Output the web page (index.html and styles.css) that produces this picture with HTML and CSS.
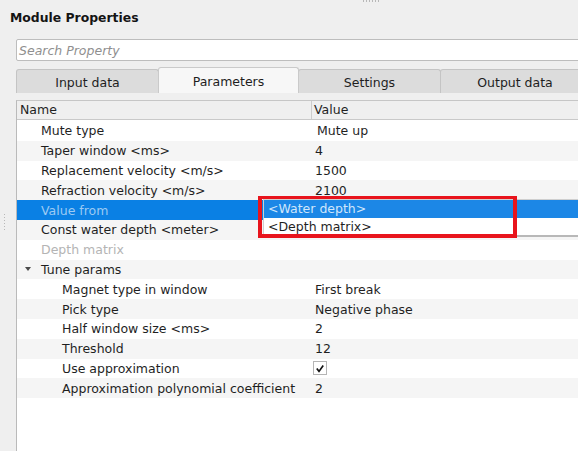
FILE: index.html
```html
<!DOCTYPE html>
<html lang="en">
<head>
<meta charset="utf-8">
<title>Module Properties</title>
<link rel="stylesheet" href="styles.css">
</head>
<body>
<div class="panel">
  <span class="grip grip-top"></span>
  <span class="grip grip-left"></span>
  <h1 class="title">Module Properties</h1>
  <div class="main">
    <div class="search"><span class="placeholder">Search Property</span></div>
    <div class="tabs">
      <div class="tab">Input data</div>
      <div class="tab tab-active">Parameters</div>
      <div class="tab">Settings</div>
      <div class="tab tab-last">Output data</div>
    </div>
    <div class="tree">
      <div class="row head">
        <div class="cell name">Name</div>
        <div class="cell value">Value</div>
      </div>
      <div class="row"><div class="cell name l1">Mute type</div><div class="cell value combo-value">Mute up</div></div>
      <div class="row alt"><div class="cell name l1">Taper window &lt;ms&gt;</div><div class="cell value">4</div></div>
      <div class="row"><div class="cell name l1">Replacement velocity &lt;m/s&gt;</div><div class="cell value">1500</div></div>
      <div class="row alt"><div class="cell name l1">Refraction velocity &lt;m/s&gt;</div><div class="cell value">2100</div></div>
      <div class="row selected"><div class="cell name l1">Value from</div><div class="cell value"></div></div>
      <div class="row alt"><div class="cell name l1">Const water depth &lt;meter&gt;</div><div class="cell value"></div></div>
      <div class="row disabled"><div class="cell name l1">Depth matrix</div><div class="cell value"></div></div>
      <div class="row alt"><div class="cell name l1 branch"><span class="arrow"></span>Tune params</div><div class="cell value"></div></div>
      <div class="row"><div class="cell name l2">Magnet type in window</div><div class="cell value">First break</div></div>
      <div class="row alt"><div class="cell name l2">Pick type</div><div class="cell value">Negative phase</div></div>
      <div class="row"><div class="cell name l2">Half window size &lt;ms&gt;</div><div class="cell value">2</div></div>
      <div class="row alt"><div class="cell name l2">Threshold</div><div class="cell value">12</div></div>
      <div class="row"><div class="cell name l2">Use approximation</div><div class="cell value"><span class="check"><svg viewBox="0 0 13 13" width="13" height="13"><path d="M3 6.6 L5.4 9.6 L10 3.2" fill="none" stroke="#111" stroke-width="1.8"/></svg></span></div></div>
      <div class="row alt"><div class="cell name l2">Approximation polynomial coefficient</div><div class="cell value">2</div></div>

      <ul class="popup">
        <li class="item item-active">&lt;Water depth&gt;</li>
        <li class="item">&lt;Depth matrix&gt;</li>
      </ul>
      <div class="mark"></div>
    </div>
  </div>
</div>
</body>
</html>
```

FILE: styles.css
```css
html, body {
  margin: 0;
  padding: 0;
  height: 100%;
  overflow: hidden;
}

body {
  background: #efefef;
  font-family: "DejaVu Sans", "Liberation Sans", sans-serif;
  font-size: 12.5px;
  color: #1f1f1f;
}

.panel {
  position: relative;
  height: 100%;
  overflow: hidden;
}

/* splitter grips */
.grip {
  position: absolute;
  background-image: radial-gradient(circle, #b8b8b8 0.8px, transparent 1px);
}
.grip-top {
  left: 362px;
  top: 0;
  width: 18px;
  height: 2px;
  background-size: 3px 2px;
}
.grip-left {
  left: 3px;
  top: 213px;
  width: 3px;
  height: 18px;
  background-size: 3px 3px;
}

.title {
  margin: 0;
  padding: 10px 0 0 10px;
  height: 29px;
  font-size: 12.4px;
  font-weight: bold;
  line-height: 16px;
  color: #141414;
}

.main {
  padding-left: 16px;
}

.search {
  height: 20px;
  margin-right: -4px;
  background: #ffffff;
  border: 1px solid #bdbdbd;
  border-radius: 2px;
  display: flex;
  align-items: center;
  padding-left: 2px;
}
.placeholder {
  font-style: italic;
  color: #8f8f8f;
}

.tabs {
  display: flex;
  margin-top: 6px;
  height: 26px;
  align-items: flex-end;
}
.tab {
  flex: none;
  box-sizing: border-box;
  width: 143px;
  height: 24px;
  background: #dcdcdc;
  border: 1px solid #c4c4c4;
  border-bottom: none;
  border-radius: 3px 3px 0 0;
  display: flex;
  align-items: center;
  justify-content: center;
  padding-top: 1px;
  color: #1e1e1e;
}
.tab + .tab {
  margin-left: -1px;
}
.tab-active {
  width: 141px;
  height: 26px;
  background: #f7f7f7;
  border-color: #cacaca;
  position: relative;
  z-index: 1;
}
.tab-last {
  width: 150px;
}

.tree {
  position: relative;
  margin-top: 7px;
  background: #ffffff;
  border-left: 1px solid #bababa;
  border-top: 1px solid #c6c6c6;
  height: 360px;
}

.row {
  display: grid;
  grid-template-columns: 294px 1fr;
  height: 19.8px;
  align-items: center;
  white-space: nowrap;
}
.row.alt {
  background: #f5f5f5;
}
.row.head {
  height: 18px;
  background: #efefef;
  border-bottom: 1px solid #c9c9c9;
  margin-bottom: 1px;
}
.head .cell {
  height: 18px;
  line-height: 18px;
}
.head .value {
  border-left: 1px solid #cdcdcd;
  padding-left: 2px;
}

.cell {
  line-height: 19px;
}
.name {
  padding-left: 3px;
}
.name.l1 {
  padding-left: 24px;
}
.name.l2 {
  padding-left: 45px;
}
.value {
  padding-left: 4px;
}
.value.combo-value {
  padding-left: 6px;
}

.branch {
  position: relative;
}
.arrow {
  position: absolute;
  left: 8px;
  top: 7px;
  width: 0;
  height: 0;
  border-left: 3.5px solid transparent;
  border-right: 3.5px solid transparent;
  border-top: 4px solid #4a4a4a;
}

.selected {
  background: #0a80e4;
  color: #9ccaf3;
}
.disabled {
  color: #b4b4b4;
}

.check {
  display: inline-flex;
  box-sizing: border-box;
  width: 14px;
  height: 14px;
  border: 1px solid #b5b5b5;
  background: #ffffff;
  vertical-align: middle;
  margin-top: -2px;
  margin-left: -2px;
  align-items: center;
  justify-content: center;
}
.check svg {
  display: block;
}

/* combo box drop-down list */
.popup {
  position: absolute;
  left: 246px;
  top: 98px;
  right: -10px;
  margin: 0;
  padding: 0;
  list-style: none;
  background: #ffffff;
  border: 1px solid #cfcfcf;
  border-bottom: 2px solid #b8b8b8;
}
.item {
  height: 17.5px;
  line-height: 17px;
  padding-left: 4px;
}
.item-active {
  background: #1c87e6;
  color: #cfe6fb;
}

/* highlight frame */
.mark {
  position: absolute;
  left: 241px;
  top: 95px;
  width: 251px;
  height: 35px;
  border: 4px solid #e8141c;
  border-top-width: 3px;
}
```
